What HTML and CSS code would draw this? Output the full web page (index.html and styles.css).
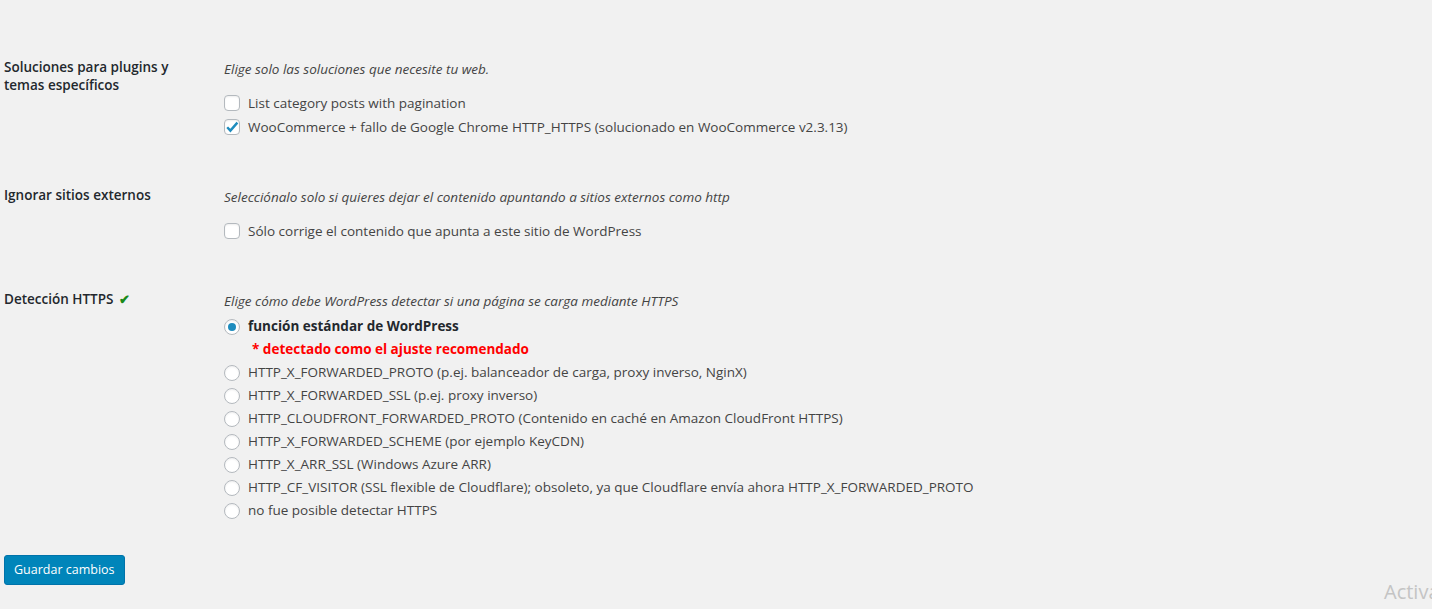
FILE: index.html
```html
<!DOCTYPE html>
<html>
<head>
    <title>Ajustes SSL</title>
    <link rel="stylesheet" href="styles.css">
</head>
<body>
    <div class="wrap">
        <form class="settings">
            <div class="row">
                <div class="label">Soluciones para plugins y temas específicos</div>
                <div class="field">
                    <p class="description">Elige solo las soluciones que necesite tu web.</p>
                    <ul class="checks">
                        <li><label><span class="check"></span>List category posts with pagination</label></li>
                        <li><label><span class="check checked">
                            <svg viewBox="0 0 16 16" width="16" height="16"><path d="M3.2 8.2 L6.4 11.6 L13.4 3.6" fill="none" stroke="#1e8cbe" stroke-width="2.4"/></svg>
                        </span>WooCommerce + fallo de Google Chrome HTTP_HTTPS (solucionado en WooCommerce v2.3.13)</label></li>
                    </ul>
                </div>
            </div>

            <div class="row">
                <div class="label">Ignorar sitios externos</div>
                <div class="field">
                    <p class="description">Selecciónalo solo si quieres dejar el contenido apuntando a sitios externos como http</p>
                    <ul class="checks">
                        <li><label><span class="check"></span>Sólo corrige el contenido que apunta a este sitio de WordPress</label></li>
                    </ul>
                </div>
            </div>

            <div class="row">
                <div class="label">Detección HTTPS <span class="ok">&#10004;</span></div>
                <div class="field">
                    <p class="description">Elige cómo debe WordPress detectar si una página se carga mediante HTTPS</p>
                    <ul class="radios">
                        <li class="strong"><label><span class="radio checked"></span>función estándar de WordPress</label></li>
                        <li class="recommended">* detectado como el ajuste recomendado</li>
                        <li><label><span class="radio"></span>HTTP_X_FORWARDED_PROTO (p.ej. balanceador de carga, proxy inverso, NginX)</label></li>
                        <li><label><span class="radio"></span>HTTP_X_FORWARDED_SSL (p.ej. proxy inverso)</label></li>
                        <li><label><span class="radio"></span>HTTP_CLOUDFRONT_FORWARDED_PROTO (Contenido en caché en Amazon CloudFront HTTPS)</label></li>
                        <li><label><span class="radio"></span>HTTP_X_FORWARDED_SCHEME (por ejemplo KeyCDN)</label></li>
                        <li><label><span class="radio"></span>HTTP_X_ARR_SSL (Windows Azure ARR)</label></li>
                        <li><label><span class="radio"></span>HTTP_CF_VISITOR (SSL flexible de Cloudflare); obsoleto, ya que Cloudflare envía ahora HTTP_X_FORWARDED_PROTO</label></li>
                        <li><label><span class="radio"></span>no fue posible detectar HTTPS</label></li>
                    </ul>
                </div>
            </div>

            <div class="submit">
                <button type="button" class="button-primary">Guardar cambios</button>
            </div>
        </form>
    </div>

    <div class="watermark">Activar Windows</div>
</body>
</html>
```

FILE: styles.css
```css
html, body { height: 100%; }
body {
    margin: 0;
    background: #f1f1f1;
    color: #444;
    font-family: "Open Sans", "Noto Sans", sans-serif;
    font-size: 13.5px;
    overflow: hidden;
}
.wrap { padding: 38px 0 0 4px; }

.row { display: flex; padding: 20px 0 27px; }
.label {
    width: 200px;
    padding-right: 10px;
    flex: none;
    font-weight: 600;
    line-height: 18px;
    color: #23282d;
}
.ok { color: #1a8a1a; font-size: 13px; margin-left: 2px; }
.field { padding-left: 10px; }

.description {
    margin: 0;
    font-style: italic;
    line-height: 22px;
    color: #444;
}

ul { list-style: none; margin: 0; padding: 0; }
.checks { margin-top: 11px; }
.checks li { height: 24px; line-height: 24px; }
.radios { margin-top: 3px; }
.radios li { height: 23px; line-height: 23px; }

label { display: flex; align-items: center; white-space: nowrap; }

.check, .radio {
    width: 16px;
    height: 16px;
    box-sizing: border-box;
    border: 1px solid #b4b9be;
    background: #fff;
    box-shadow: inset 0 1px 2px rgba(0,0,0,.07);
    margin-right: 8px;
    flex: none;
    position: relative;
}
.check { border-radius: 4px; }
.check svg { position: absolute; left: -1px; top: -1px; }
.radio { border-radius: 50%; }
.radio.checked::after {
    content: "";
    position: absolute;
    left: 3px;
    top: 3px;
    width: 8px;
    height: 8px;
    border-radius: 50%;
    background: #1e8cbe;
}

.strong { font-weight: 700; color: #23282d; }
.recommended {
    padding-left: 28px;
    color: #f00;
    font-weight: 700;
}

.submit { padding-top: 6px; }
.button-primary {
    height: 30px;
    padding: 0 9px;
    background: #0085ba;
    border: 1px solid #0073aa;
    border-radius: 3px;
    color: #fff;
    font-family: inherit;
    font-size: 12.5px;
    line-height: 28px;
}

.watermark {
    position: absolute;
    left: 1384px;
    top: 578px;
    font-size: 20px;
    color: #c4c4c4;
    white-space: nowrap;
}
```
